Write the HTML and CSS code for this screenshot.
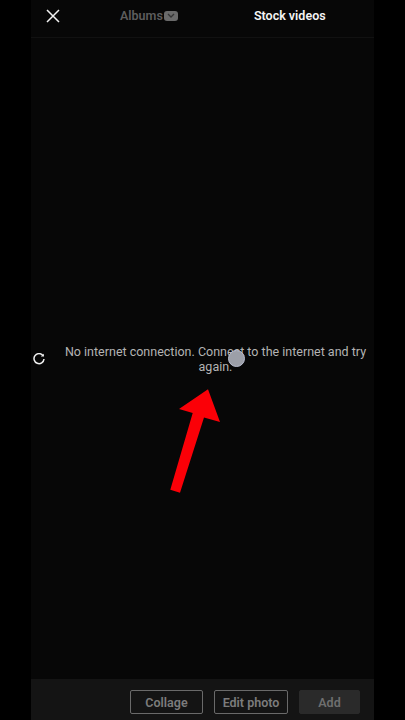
FILE: index.html
```html
<!DOCTYPE html>
<html lang="en">
<head>
<meta charset="utf-8">
<title>Stock videos</title>
<link rel="stylesheet" href="styles.css">
</head>
<body>
<div class="screen">
  <header class="topbar">
    <button class="close" aria-label="Close">
      <svg width="14" height="14" viewBox="0 0 14 14"><path d="M1 1 13 13M13 1 1 13" stroke="#f2f2f2" stroke-width="1.5" fill="none"/></svg>
    </button>
    <div class="tab tab-albums">Albums
      <span class="chev"><svg width="8" height="5" viewBox="0 0 8 5"><path d="M1 1 4 4 7 1" stroke="#333" stroke-width="1.3" fill="none"/></svg></span>
    </div>
    <div class="tab tab-stock">Stock videos</div>
  </header>
  <main class="content">
    <svg class="spinner" width="12" height="12" viewBox="0 0 12 12"><path d="M10 2.6A5 5 0 1 0 11 6" stroke="#f2f2f2" stroke-width="1.5" fill="none"/><path d="M7.8 3.4 11 3.6 10.8.8Z" fill="#f2f2f2"/></svg>
    <p class="message">No internet connection. Connect to the internet and try again.</p>
  </main>
  <footer class="actions">
    <button class="btn btn-collage">Collage</button>
    <button class="btn">Edit photo</button>
    <button class="btn btn-add">Add</button>
  </footer>
</div>
<div class="touch"></div>
<svg class="arrow" width="405" height="720" viewBox="0 0 405 720"><path d="M208 389.3 220 422 204 417.5 180 492.7 170.3 489.7 192.7 413 179 409Z" fill="#fb0007"/></svg>
</body>
</html>
```
FILE: styles.css
```css
* { box-sizing: border-box; }
html, body { margin: 0; height: 100%; }
body {
  background: #000;
  font-family: Roboto, "Liberation Sans", sans-serif;
  position: relative;
  overflow: hidden;
  display: flex;
  justify-content: center;
}
.screen {
  width: 343px;
  height: 720px;
  background: #070707;
  display: flex;
  flex-direction: column;
}
.topbar {
  height: 38px;
  flex: none;
  border-bottom: 1px solid #111;
  display: flex;
  align-items: center;
  padding: 0 0 5px 15px;
  font-size: 12.5px;
  font-weight: 600;
}
.close {
  background: none;
  border: 0;
  padding: 0;
  width: 14px;
  height: 14px;
  display: flex;
}
.tab { display: flex; align-items: center; padding-bottom: 1px; }
.tab-albums { margin-left: 60px; color: #5d5d5d; gap: 1px; }
.chev {
  width: 14px;
  height: 10px;
  border-radius: 3px;
  background: #6a6a6a;
  display: flex;
  align-items: center;
  justify-content: center;
}
.tab-stock { margin-left: 76px; color: #f4f4f4; }
.content {
  flex: 1;
  display: flex;
  align-items: center;
  padding-left: 2px;
}
.spinner { flex: none; }
.message {
  margin: 1px 0 0 19px;
  width: 303px;
  font-size: 12.5px;
  line-height: 15px;
  color: #b4b4b4;
  text-align: center;
}
.actions {
  height: 41px;
  flex: none;
  background: #141414;
  display: flex;
  justify-content: flex-end;
  gap: 11px;
  padding: 11px 14px 6px 0;
}
.btn {
  font: 600 12.5px Roboto, "Liberation Sans", sans-serif;
  color: #7c7c7c;
  background: #141414;
  border: 1px solid #6a6a6a;
  border-radius: 2px;
  width: 74px;
  padding: 0;
}
.btn-collage { width: 73px; }
.btn-add {
  width: 61px;
  background: #2a2a2a;
  border-color: #2a2a2a;
  color: #6f6f6f;
}
.touch {
  position: absolute;
  left: 228px;
  top: 350px;
  width: 17px;
  height: 17px;
  border-radius: 50%;
  background: #9c9fa8;
  border: 1.5px solid #b9bed0;
}
.arrow { position: absolute; left: 0; top: 0; }
```
